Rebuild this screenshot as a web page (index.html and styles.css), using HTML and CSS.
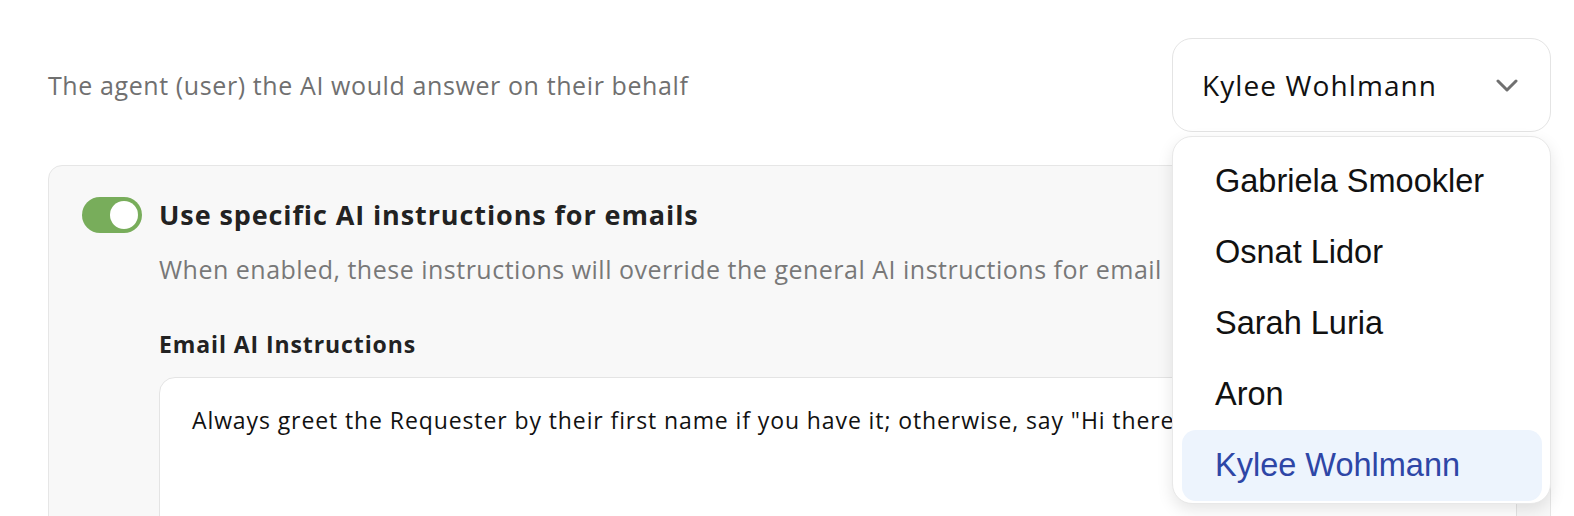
FILE: index.html
```html
<!DOCTYPE html>
<html lang="en">
<head>
<meta charset="utf-8">
<title>Email AI settings</title>
<link rel="stylesheet" href="styles.css">
</head>
<body>
<div class="page">
  <div class="agent-row">
    <p class="agent-desc">The agent (user) the AI would answer on their behalf</p>
    <div class="select-wrap">
      <div class="select">
        <span class="select-value">Kylee Wohlmann</span>
        <svg class="chevron" width="22" height="14" viewBox="0 0 22 14"><polyline points="2,2 11,11 20,2" fill="none" stroke="#707070" stroke-width="3" stroke-linecap="round" stroke-linejoin="round"/></svg>
      </div>
      <ul class="menu">
        <li class="menu-item">Gabriela Smookler</li>
        <li class="menu-item">Osnat Lidor</li>
        <li class="menu-item">Sarah Luria</li>
        <li class="menu-item">Aron</li>
        <li class="menu-item selected">Kylee Wohlmann</li>
      </ul>
    </div>
  </div>

  <section class="panel">
    <div class="toggle-row">
      <span class="toggle"><span class="knob"></span></span>
      <h2 class="toggle-title">Use specific AI instructions for emails</h2>
    </div>
    <div class="panel-body">
      <p class="toggle-desc">When enabled, these instructions will override the general AI instructions for email</p>
      <label class="field-label">Email AI Instructions</label>
      <div class="textarea">Always greet the Requester by their first name if you have it; otherwise, say "Hi there"</div>
    </div>
  </section>
</div>
</body>
</html>
```

FILE: styles.css
```css
* { box-sizing: border-box; }
html, body { margin: 0; padding: 0; background: #ffffff; }
body {
  font-family: "Open Sans", "Lato", sans-serif;
  color: #1f1f1f;
  overflow: hidden;
  height: 516px;
}
.page {
  padding: 38px 23px 0 48px;
  height: 516px;
  overflow: hidden;
}
.agent-row {
  display: flex;
  justify-content: space-between;
  align-items: center;
}
.agent-desc {
  margin: 0;
  font-size: 25px;
  letter-spacing: 0.6px;
  color: #707070;
}
.select-wrap {
  position: relative;
  width: 379px;
}
.select {
  height: 94px;
  border: 1px solid #e4e4e4;
  border-radius: 20px;
  background: #fff;
  display: flex;
  align-items: center;
  justify-content: space-between;
  padding: 0 32px 0 29px;
}
.select-value {
  font-size: 28px;
  letter-spacing: 1.1px;
  color: #111;
}
.chevron { display: block; margin-top: 2px; }
.menu {
  position: absolute;
  top: 98px;
  left: 0;
  width: 100%;
  margin: 0;
  padding: 9px 8px 2px 9px;
  list-style: none;
  background: #fff;
  border: 1px solid #e8e8e8;
  border-radius: 20px;
  box-shadow: 0 6px 16px rgba(0,0,0,0.10);
  z-index: 10;
}
.menu-item {
  height: 71px;
  display: flex;
  align-items: center;
  padding-left: 33px;
  font-family: "Liberation Sans", Arial, sans-serif;
  font-size: 32.5px;
  color: #111;
  border-radius: 14px;
}
.menu-item.selected {
  background: #edf4fd;
  color: #2e46a6;
}
.panel {
  margin-top: 33px;
  background: #f8f8f8;
  border: 1px solid #e6e6e6;
  border-radius: 14px;
  padding: 31px 33px 0 33px;
  height: 400px;
}
.toggle-row {
  display: flex;
  align-items: center;
  gap: 17px;
}
.toggle {
  width: 60px;
  height: 36px;
  border-radius: 18px;
  background: #78ad5b;
  position: relative;
  flex: none;
}
.knob {
  position: absolute;
  right: 4px;
  top: 4px;
  width: 28px;
  height: 28px;
  border-radius: 50%;
  background: #fff;
}
.toggle-title {
  margin: 0;
  font-size: 27px;
  letter-spacing: 0.9px;
  line-height: 36px;
  font-weight: 700;
  color: #222;
}
.panel-body {
  padding-left: 77px;
}
.toggle-desc {
  margin: 18px 0 0;
  font-size: 25px;
  letter-spacing: 0.5px;
  line-height: 36px;
  color: #787878;
}
.field-label {
  display: block;
  margin-top: 41px;
  font-size: 23px;
  letter-spacing: 0.9px;
  line-height: 32px;
  font-weight: 700;
  color: #222;
}
.textarea {
  margin-top: 17px;
  background: #fff;
  border: 1px solid #e4e4e4;
  border-radius: 16px;
  height: 200px;
  padding: 24px 32px;
  font-size: 23px;
  letter-spacing: 0.9px;
  line-height: 36px;
  color: #111;
  white-space: nowrap;
  overflow: hidden;
}
```
